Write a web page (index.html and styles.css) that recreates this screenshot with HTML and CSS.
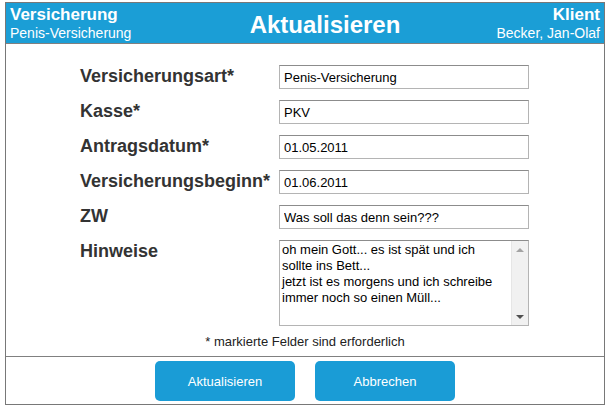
FILE: index.html
```html
<!DOCTYPE html>
<html lang="de">
<head>
<meta charset="utf-8">
<title>Aktualisieren</title>
<link rel="stylesheet" href="styles.css">
</head>
<body>
<div class="frame">
  <header class="header">
    <div class="head-left">
      <div class="head-strong">Versicherung</div>
      <div class="head-sub">Penis-Versicherung</div>
    </div>
    <div class="head-title">Aktualisieren</div>
    <div class="head-right">
      <div class="head-strong">Klient</div>
      <div class="head-sub">Becker, Jan-Olaf</div>
    </div>
  </header>
  <main class="content">
    <form class="form">
      <label class="label" for="art">Versicherungsart*</label>
      <input class="field" id="art" type="text" value="Penis-Versicherung">
      <label class="label" for="kasse">Kasse*</label>
      <input class="field" id="kasse" type="text" value="PKV">
      <label class="label" for="datum">Antragsdatum*</label>
      <input class="field" id="datum" type="text" value="01.05.2011">
      <label class="label" for="beginn">Versicherungsbeginn*</label>
      <input class="field" id="beginn" type="text" value="01.06.2011">
      <label class="label" for="zw">ZW</label>
      <input class="field" id="zw" type="text" value="Was soll das denn sein???">
      <label class="label" for="hinweise">Hinweise</label>
      <div class="area">
        <textarea class="area-text" id="hinweise">oh mein Gott... es ist spät und ich sollte ins Bett...
jetzt ist es morgens und ich schreibe immer noch so einen Müll...</textarea>
        <div class="scrollbar">
          <span class="arrow arrow-up"></span>
          <span class="arrow arrow-down"></span>
        </div>
      </div>
    </form>
    <p class="note">* markierte Felder sind erforderlich</p>
  </main>
  <footer class="footer">
    <button class="btn" type="button">Aktualisieren</button>
    <button class="btn" type="button">Abbrechen</button>
  </footer>
</div>
</body>
</html>
```
FILE: styles.css
```css
html, body {
  margin: 0;
  padding: 0;
  background: #ffffff;
}
body {
  font-family: "Liberation Sans", Arial, sans-serif;
  width: 605px;
  height: 405px;
  overflow: hidden;
}
.frame {
  box-sizing: border-box;
  margin: 2px 0 0 5px;
  width: 600px;
  height: 403px;
  border: 1px solid #787878;
  display: flex;
  flex-direction: column;
}
.header {
  background: #1b9ed6;
  color: #ffffff;
  height: 40px;
  border-bottom: 1px solid #808080;
  display: grid;
  grid-template-columns: 180px 1fr 140px;
  align-items: start;
}
.head-left {
  padding: 3px 0 0 4px;
}
.head-right {
  padding: 3px 4px 0 0;
  text-align: right;
}
.head-strong {
  font-weight: bold;
  font-size: 17px;
  line-height: 18px;
}
.head-sub {
  font-size: 14px;
  line-height: 18px;
}
.head-title {
  text-align: center;
  font-weight: bold;
  font-size: 24px;
  line-height: 24px;
  padding-top: 10px;
}
.content {
  flex: 1;
  display: flex;
  flex-direction: column;
  border-bottom: 1px solid #808080;
}
.form {
  margin: 21px 0 0 74px;
  display: grid;
  grid-template-columns: 199px 250px;
  row-gap: 11px;
  align-items: start;
}
.label {
  font-weight: bold;
  font-size: 18px;
  line-height: 20px;
  color: #333333;
  padding-top: 1px;
}
.field {
  box-sizing: border-box;
  width: 250px;
  height: 24px;
  margin: 0;
  padding: 0 4px;
  border: 1px solid #b4b4b4;
  border-top-color: #8c8c8c;
  font-family: "Liberation Sans", Arial, sans-serif;
  font-size: 13px;
  color: #000000;
  background: #ffffff;
}
.area {
  box-sizing: border-box;
  width: 250px;
  height: 86px;
  border: 1px solid #b4b4b4;
  border-top-color: #8c8c8c;
  display: flex;
}
.area-text {
  flex: 1;
  border: 0;
  margin: 0;
  padding: 1px 14px 1px 2px;
  resize: none;
  overflow: hidden;
  font-family: "Liberation Sans", Arial, sans-serif;
  font-size: 13px;
  line-height: 16px;
  color: #000000;
}
.scrollbar {
  width: 17px;
  background: #f1f1f1;
  border-left: 1px solid #e6e6e6;
  display: flex;
  flex-direction: column;
  justify-content: space-between;
  align-items: center;
  padding: 7px 0 6px;
  box-sizing: border-box;
}
.arrow {
  width: 0;
  height: 0;
  border-left: 4px solid transparent;
  border-right: 4px solid transparent;
}
.arrow-up {
  border-bottom: 4px solid #a3a3a3;
}
.arrow-down {
  border-top: 4px solid #505050;
}
.note {
  margin: 8px 0 0;
  text-align: center;
  font-size: 13px;
  line-height: 16px;
  color: #222222;
}
.footer {
  height: 47px;
  display: flex;
  justify-content: center;
  align-items: flex-start;
  gap: 20px;
  padding-top: 4px;
  box-sizing: border-box;
}
.btn {
  width: 140px;
  height: 40px;
  border: 0;
  border-radius: 5px;
  background: #1a9cd6;
  color: #ffffff;
  font-family: "Liberation Sans", Arial, sans-serif;
  font-size: 13px;
  padding: 0;
}
```
